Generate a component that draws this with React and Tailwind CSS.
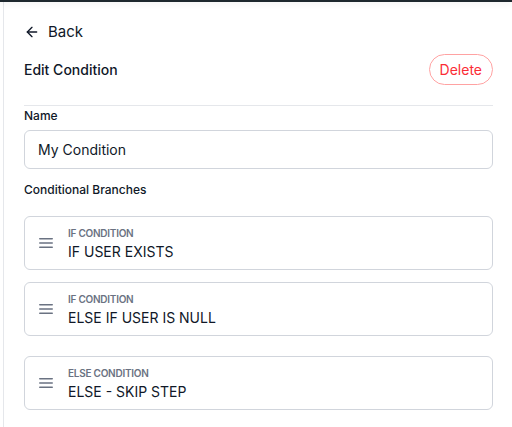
import { ArrowLeft } from 'lucide-react'

const BRANCHES = [
  { kind: 'IF CONDITION', label: 'IF USER EXISTS', space: '' },
  { kind: 'IF CONDITION', label: 'ELSE IF USER IS NULL', space: 'mt-[12px]' },
  { kind: 'ELSE CONDITION', label: 'ELSE - SKIP STEP', space: 'mt-[20px]' },
]

function DragHandle() {
  return (
    <svg width="14" height="10" viewBox="0 0 14 10" className="shrink-0 text-gray-500">
      <rect x="0" y="0" width="14" height="1.6" rx="0.8" fill="currentColor" />
      <rect x="0" y="4.2" width="14" height="1.6" rx="0.8" fill="currentColor" />
      <rect x="0" y="8.4" width="14" height="1.6" rx="0.8" fill="currentColor" />
    </svg>
  )
}

function BranchCard({ kind, label, space }) {
  return (
    <div className={`flex items-center h-[54px] border border-gray-300 rounded-md bg-white pl-[14px] ${space}`}>
      <DragHandle />
      <div className="ml-[15px] flex flex-col pt-[2px]">
        <span className="text-[10px] font-semibold text-gray-500 leading-[12px] tracking-tight">{kind}</span>
        <span className="text-[14px] text-gray-900 leading-[20px] mt-[3px]">{label}</span>
      </div>
    </div>
  )
}

export default function App() {
  return (
    <div
      className="w-[512px] h-[427px] overflow-hidden bg-white relative"
      style={{ fontFamily: 'Inter, "Noto Sans", sans-serif' }}
    >
      <div className="absolute top-0 left-0 right-0 h-[2px] bg-[#1e282e] shadow-[0_1px_6px_rgba(0,0,0,0.12)]" />
      <div className="ml-[3px] h-full border-l border-gray-200 pl-[20px] pr-[19px] pt-[22px]">
        <button className="flex items-center gap-[8px] h-[20px] text-gray-900 text-[15px]">
          <ArrowLeft size={16} strokeWidth={2} />
          <span>Back</span>
        </button>

        <div className="flex items-center justify-between mt-[12px]">
          <h2 className="text-[14px] font-medium text-gray-900">Edit Condition</h2>
          <button className="h-[31px] px-[10px] rounded-full border border-red-300 text-red-500 text-[14px]">
            Delete
          </button>
        </div>

        <div className="mt-[20px] border-t border-gray-200" />

        <label className="block mt-[1px] text-[12px] font-medium text-gray-900 leading-[18px]">Name</label>
        <div className="mt-[5px] h-[39px] flex items-center px-[13px] border border-gray-300 rounded-md text-[14px] text-gray-900">
          My Condition
        </div>

        <div className="mt-[12px] text-[12px] font-medium text-gray-900 leading-[18px]">Conditional Branches</div>

        <div className="mt-[17px] flex flex-col">
          {BRANCHES.map((b, i) => (
            <BranchCard key={i} {...b} />
          ))}
        </div>
      </div>
    </div>
  )
}
